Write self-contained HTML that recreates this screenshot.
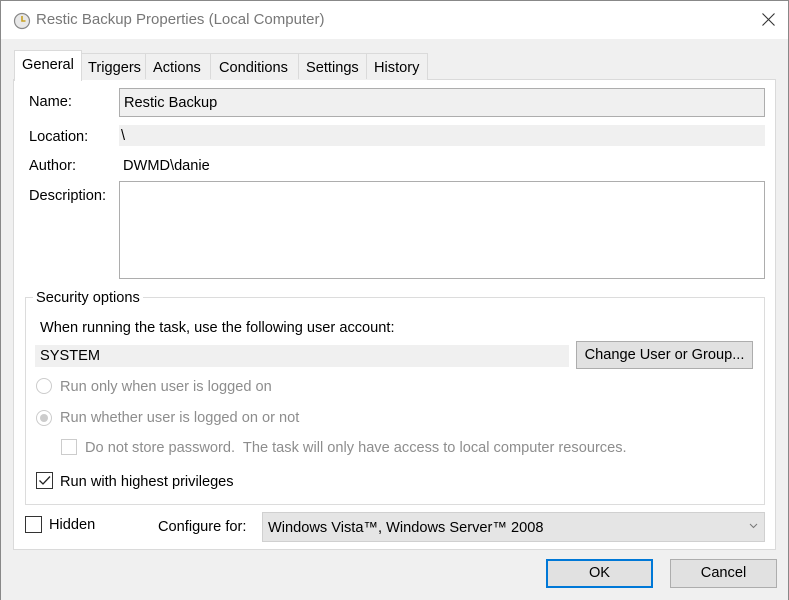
<!DOCTYPE html><html><head><style>
body{margin:0;width:789px;height:600px;background:#f0f0f0;font-family:"Liberation Sans",sans-serif;font-size:14.6px;color:#000;position:relative;overflow:hidden}
.a{position:absolute;white-space:nowrap}
.box{position:absolute;box-sizing:border-box}
.btn{position:absolute;box-sizing:border-box;background:#e1e1e1;border:1px solid #adadad;text-align:center}
.dis{color:#8d8d8d}
</style></head><body>
<div class="box" style="left:0;top:0;width:789px;height:600px;border:1px solid #888;border-bottom:none"></div>
<div class="box" style="left:1px;top:1px;width:787px;height:38px;background:#fff"></div>
<svg class="a" style="left:13px;top:12px" width="18" height="18" viewBox="0 0 18 18"><circle cx="9" cy="9" r="7.5" fill="#e8e8e8" stroke="#888" stroke-width="1.2"/><path d="M9 4v5h3.5" stroke="#c8a020" stroke-width="1.6" fill="none"/></svg>
<div class="a" style="left:36px;top:11px;font-size:15px;color:#777">Restic Backup Properties (Local Computer)</div>
<svg class="a" style="left:762px;top:13px" width="13" height="13"><path d="M0.5 0.5l12 12M12.5 0.5l-12 12" stroke="#333" stroke-width="1.1"/></svg>
<div class="box" style="left:13px;top:79px;width:763px;height:471px;background:#fff;border:1px solid #dadada"></div>
<div class="box" style="left:81px;top:53px;width:347px;height:27px;background:#f0f0f0;border:1px solid #dadada;border-bottom:none"></div>
<div class="box" style="left:145px;top:53px;width:1px;height:26px;background:#dadada"></div>
<div class="box" style="left:210px;top:53px;width:1px;height:26px;background:#dadada"></div>
<div class="box" style="left:298px;top:53px;width:1px;height:26px;background:#dadada"></div>
<div class="box" style="left:366px;top:53px;width:1px;height:26px;background:#dadada"></div>
<div class="box" style="left:14px;top:50px;width:68px;height:31px;background:#fff;border:1px solid #dadada;border-bottom:none"></div>
<div class="a" style="left:22px;top:57px">General</div>
<div class="a" style="left:88px;top:60px">Triggers</div>
<div class="a" style="left:153px;top:60px">Actions</div>
<div class="a" style="left:219px;top:60px">Conditions</div>
<div class="a" style="left:306px;top:60px">Settings</div>
<div class="a" style="left:374px;top:60px">History</div>
<div class="a" style="left:29px;top:94px">Name:</div>
<div class="box" style="left:119px;top:88px;width:646px;height:29px;background:#f0f0f0;border:1px solid #adadad"></div>
<div class="a" style="left:124px;top:95px">Restic Backup</div>
<div class="a" style="left:29px;top:129px">Location:</div>
<div class="box" style="left:119px;top:125px;width:646px;height:21px;background:#f0f0f0"></div>
<div class="a" style="left:121px;top:128px">\</div>
<div class="a" style="left:29px;top:158px">Author:</div>
<div class="a" style="left:123px;top:158px">DWMD\danie</div>
<div class="a" style="left:29px;top:188px">Description:</div>
<div class="box" style="left:119px;top:181px;width:646px;height:98px;background:#fff;border:1px solid #adadad"></div>
<div class="box" style="left:25px;top:297px;width:740px;height:208px;border:1px solid #dcdcdc"></div>
<div class="a" style="left:33px;top:290px;background:#fff;padding:0 3px">Security options</div>
<div class="a" style="left:40px;top:320px">When running the task, use the following user account:</div>
<div class="box" style="left:35px;top:345px;width:534px;height:22px;background:#f0f0f0"></div>
<div class="a" style="left:40px;top:348px">SYSTEM</div>
<div class="btn" style="left:576px;top:341px;width:177px;height:28px;line-height:26px">Change User or Group...</div>
<div class="box" style="left:36px;top:378px;width:16px;height:16px;border-radius:50%;border:1px solid #ccc"></div>
<div class="a dis" style="left:60px;top:379px">Run only when user is logged on</div>
<div class="box" style="left:36px;top:410px;width:16px;height:16px;border-radius:50%;border:1px solid #ccc"></div>
<div class="box" style="left:40px;top:414px;width:8px;height:8px;border-radius:50%;background:#ccc"></div>
<div class="a dis" style="left:60px;top:410px">Run whether user is logged on or not</div>
<div class="box" style="left:61px;top:439px;width:16px;height:16px;border:1px solid #ccc"></div>
<div class="a dis" style="left:85px;top:440px">Do not store password.&nbsp; The task will only have access to local computer resources.</div>
<div class="box" style="left:36px;top:472px;width:17px;height:17px;border:1px solid #333"></div>
<svg class="a" style="left:37px;top:473px" width="15" height="15"><path d="M2.5 7.5l3.5 3.5 7-7.5" stroke="#222" stroke-width="1.3" fill="none"/></svg>
<div class="a" style="left:60px;top:474px">Run with highest privileges</div>
<div class="box" style="left:25px;top:516px;width:17px;height:17px;border:1px solid #333"></div>
<div class="a" style="left:49px;top:517px">Hidden</div>
<div class="a" style="left:158px;top:519px">Configure for:</div>
<div class="box" style="left:262px;top:512px;width:503px;height:30px;background:#e5e5e5;border:1px solid #d0d0d0"></div>
<div class="a" style="left:268px;top:520px">Windows Vista™, Windows Server™ 2008</div>
<svg class="a" style="left:749px;top:523px" width="9" height="6"><path d="M1 1l3.5 3.5L8 1" stroke="#777" fill="none"/></svg>
<div class="btn" style="left:546px;top:559px;width:107px;height:29px;line-height:25px;border:2px solid #0078d7">OK</div>
<div class="btn" style="left:670px;top:559px;width:107px;height:29px;line-height:27px">Cancel</div>
</body></html>
